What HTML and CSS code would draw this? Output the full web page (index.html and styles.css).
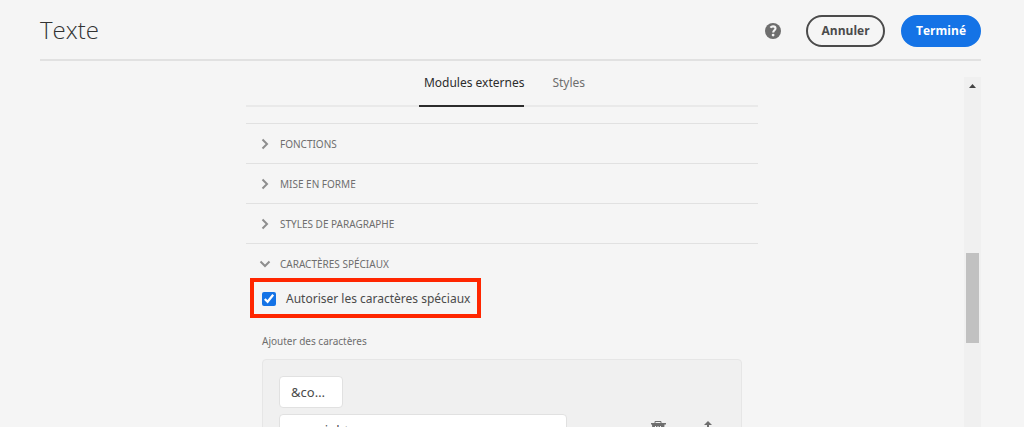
FILE: index.html
```html
<!DOCTYPE html>
<html lang="fr">
<head>
<meta charset="utf-8">
<title>Texte</title>
<link rel="stylesheet" href="styles.css">
</head>
<body>
<header class="header">
  <h1 class="title">Texte</h1>
  <div class="actions">
    <button class="help" type="button" aria-label="Aide">
      <svg width="16" height="16" viewBox="0 0 16 16"><circle cx="8" cy="8" r="8" fill="#6e6e6e"/><path d="M5.4 4.600C6.200 3.700 7 3.400 8 3.400c1.600 0 2.500.8 2.500 2 0 1.800-2.300 2-2.300 4.100" fill="none" stroke="#f5f5f5" stroke-width="2.100"/><circle cx="8.100" cy="12.100" r="1.400" fill="#f5f5f5"/></svg>
    </button>
    <button class="button" type="button">Annuler</button>
    <button class="button primary" type="button">Terminé</button>
  </div>
</header>
<div class="workspace">
  <main class="content">
    <div class="tabs" role="tablist">
      <button class="tab selected" type="button" role="tab" aria-selected="true">Modules externes</button>
      <button class="tab" type="button" role="tab" aria-selected="false">Styles</button>
    </div>
    <section class="section">
      <button class="section-head" type="button"><svg class="chevron" viewBox="0 0 12 12"><path d="M3.500 1.500L8 6l-4.500 4.500"/></svg>FONCTIONS</button>
    </section>
    <section class="section">
      <button class="section-head" type="button"><svg class="chevron" viewBox="0 0 12 12"><path d="M3.500 1.500L8 6l-4.500 4.500"/></svg>MISE EN FORME</button>
    </section>
    <section class="section">
      <button class="section-head" type="button"><svg class="chevron" viewBox="0 0 12 12"><path d="M3.500 1.500L8 6l-4.500 4.500"/></svg>STYLES DE PARAGRAPHE</button>
    </section>
    <section class="section">
      <button class="section-head" type="button" aria-expanded="true"><svg class="chevron" viewBox="0 0 12 12"><path d="M1.500 3.500L6 8l4.500-4.500"/></svg>CARACTÈRES SPÉCIAUX</button>
      <div class="section-body">
        <label class="allow"><input class="check" type="checkbox" checked>Autoriser les caractères spéciaux</label>
        <h2 class="field-label">Ajouter des caractères</h2>
        <div class="panel">
          <input class="field code" type="text" value="&amp;copy;" aria-label="Entité">
          <div class="row">
            <input class="field name" type="text" value="copyright" aria-label="Nom">
            <div class="tools">
              <button type="button" aria-label="Supprimer"><svg width="18" height="18" viewBox="0 0 18 18"><path d="M6 3V.5h6V3" fill="none" stroke="#6e6e6e"/><path d="M2 2h15v1.500H2zM3 3.500h12.500L14.500 17H4z" fill="#6e6e6e"/><path d="M6.500 5v10M9 5v10M11.500 5v10" stroke="#f0f0f0"/></svg></button>
              <button type="button" aria-label="Déplacer"><svg width="18" height="18" viewBox="0 0 18 18"><path d="M9 0l4 4h-3v10h3l-4 4-4-4h3V4H5z" fill="#6e6e6e"/></svg></button>
            </div>
          </div>
        </div>
      </div>
    </section>
  </main>
  <div class="scrollbar" aria-hidden="true">
    <svg class="scroll-up" width="7" height="4" viewBox="0 0 7 4"><path d="M0 4L3.500 0 7 4z" fill="#444"/></svg>
    <div class="thumb"></div>
  </div>
</div>
</body>
</html>
```
FILE: styles.css
```css
* { box-sizing: border-box; }

body {
  display: flex;
  flex-direction: column;
  height: 100vh;
  margin: 0;
  padding: 0 43px 0 40px;
  overflow: hidden;
  background: #f5f5f5;
  color: #4b4b4b;
  font: 12px/20px "Noto Sans", "Open Sans", sans-serif;
}

button {
  padding: 0;
  border: 0;
  background: none;
  color: inherit;
  font: inherit;
  cursor: pointer;
}

svg { display: block; }

.header {
  display: flex;
  flex: none;
  align-items: center;
  justify-content: space-between;
  height: 61px;
  border-bottom: 2px solid #e1e1e1;
}

.title {
  margin: 0;
  color: #323232;
  font: 300 24px/32px "Open Sans", "Noto Sans", sans-serif;
}

.actions {
  display: flex;
  align-items: center;
  gap: 16px;
  padding-top: 2px;
}

.help { margin-right: 9px; }

.button {
  min-width: 79px;
  height: 32px;
  padding: 0 13px;
  border: 2px solid #4b4b4b;
  border-radius: 16px;
  font: 700 12px/20px "Open Sans", "Noto Sans", sans-serif;
}

.primary {
  border-color: #1473e6;
  background: #1473e6;
  color: #fff;
}

.workspace {
  display: flex;
  flex: 1;
  min-height: 0;
}

.content {
  width: 100%;
  max-width: 512px;
  margin: 0 auto;
  overflow: hidden;
}

.tabs {
  display: flex;
  justify-content: center;
  gap: 28px;
  height: 46px;
  margin-bottom: 16px;
  border-bottom: 2px solid #e9e9e9;
}

.tab {
  height: 46px;
  padding-left: 5px;
  border-bottom: 2px solid transparent;
  color: #6e6e6e;
}

.tab + .tab { padding-left: 0; }

.selected {
  border-color: #2c2c2c;
  color: #2c2c2c;
}

.section { border-top: 1px solid #e1e1e1; }

.section-head {
  display: flex;
  align-items: center;
  gap: 9px;
  width: 100%;
  height: 39px;
  padding: 0 13px;
  color: #6e6e6e;
  font-size: 10px;
}

.section-head[aria-expanded] {
  height: 34px;
  padding-top: 6px;
}

.chevron {
  width: 12px;
  height: 12px;
  fill: none;
  stroke: #8e8e8e;
  stroke-width: 2;
}

.section-body { padding: 0 16px; }

.allow {
  display: flex;
  align-items: center;
  gap: 10px;
  width: fit-content;
  height: 40px;
  margin-left: -12px;
  padding: 2px 7px 0 8px;
  border: 4px solid #ff2600;
}

.check {
  width: 14px;
  height: 14px;
  margin: 0;
  accent-color: #1473e6;
}

.field-label {
  margin: 13px 0 8px;
  color: #6e6e6e;
  font-size: 10px;
  font-weight: 400;
  line-height: 20px;
}

.panel {
  padding: 16px;
  border: 1px solid #e6e6e6;
  border-radius: 4px;
  background: #f0f0f0;
}

.field {
  display: block;
  height: 32px;
  padding: 0 11px;
  border: 1px solid #e1e1e1;
  border-radius: 4px;
  background: #fff;
  color: #4b4b4b;
  font: inherit;
  font-size: 13px;
  text-overflow: ellipsis;
}

.code {
  width: 64px;
  padding-right: 15px;
  margin-bottom: 6px;
}

.name { flex: 0 1 288px; }

.row {
  display: flex;
  align-items: center;
  justify-content: space-between;
}

.tools {
  display: flex;
  gap: 32px;
  padding-right: 8px;
}

.scrollbar {
  flex: none;
  width: 17px;
  margin-top: 16px;
  padding: 7px 2px 0;
  background: #f0f0f0;
}

.scroll-up { margin: 0 auto 165px; }

.thumb {
  height: 90px;
  background: #c1c1c1;
}
```
